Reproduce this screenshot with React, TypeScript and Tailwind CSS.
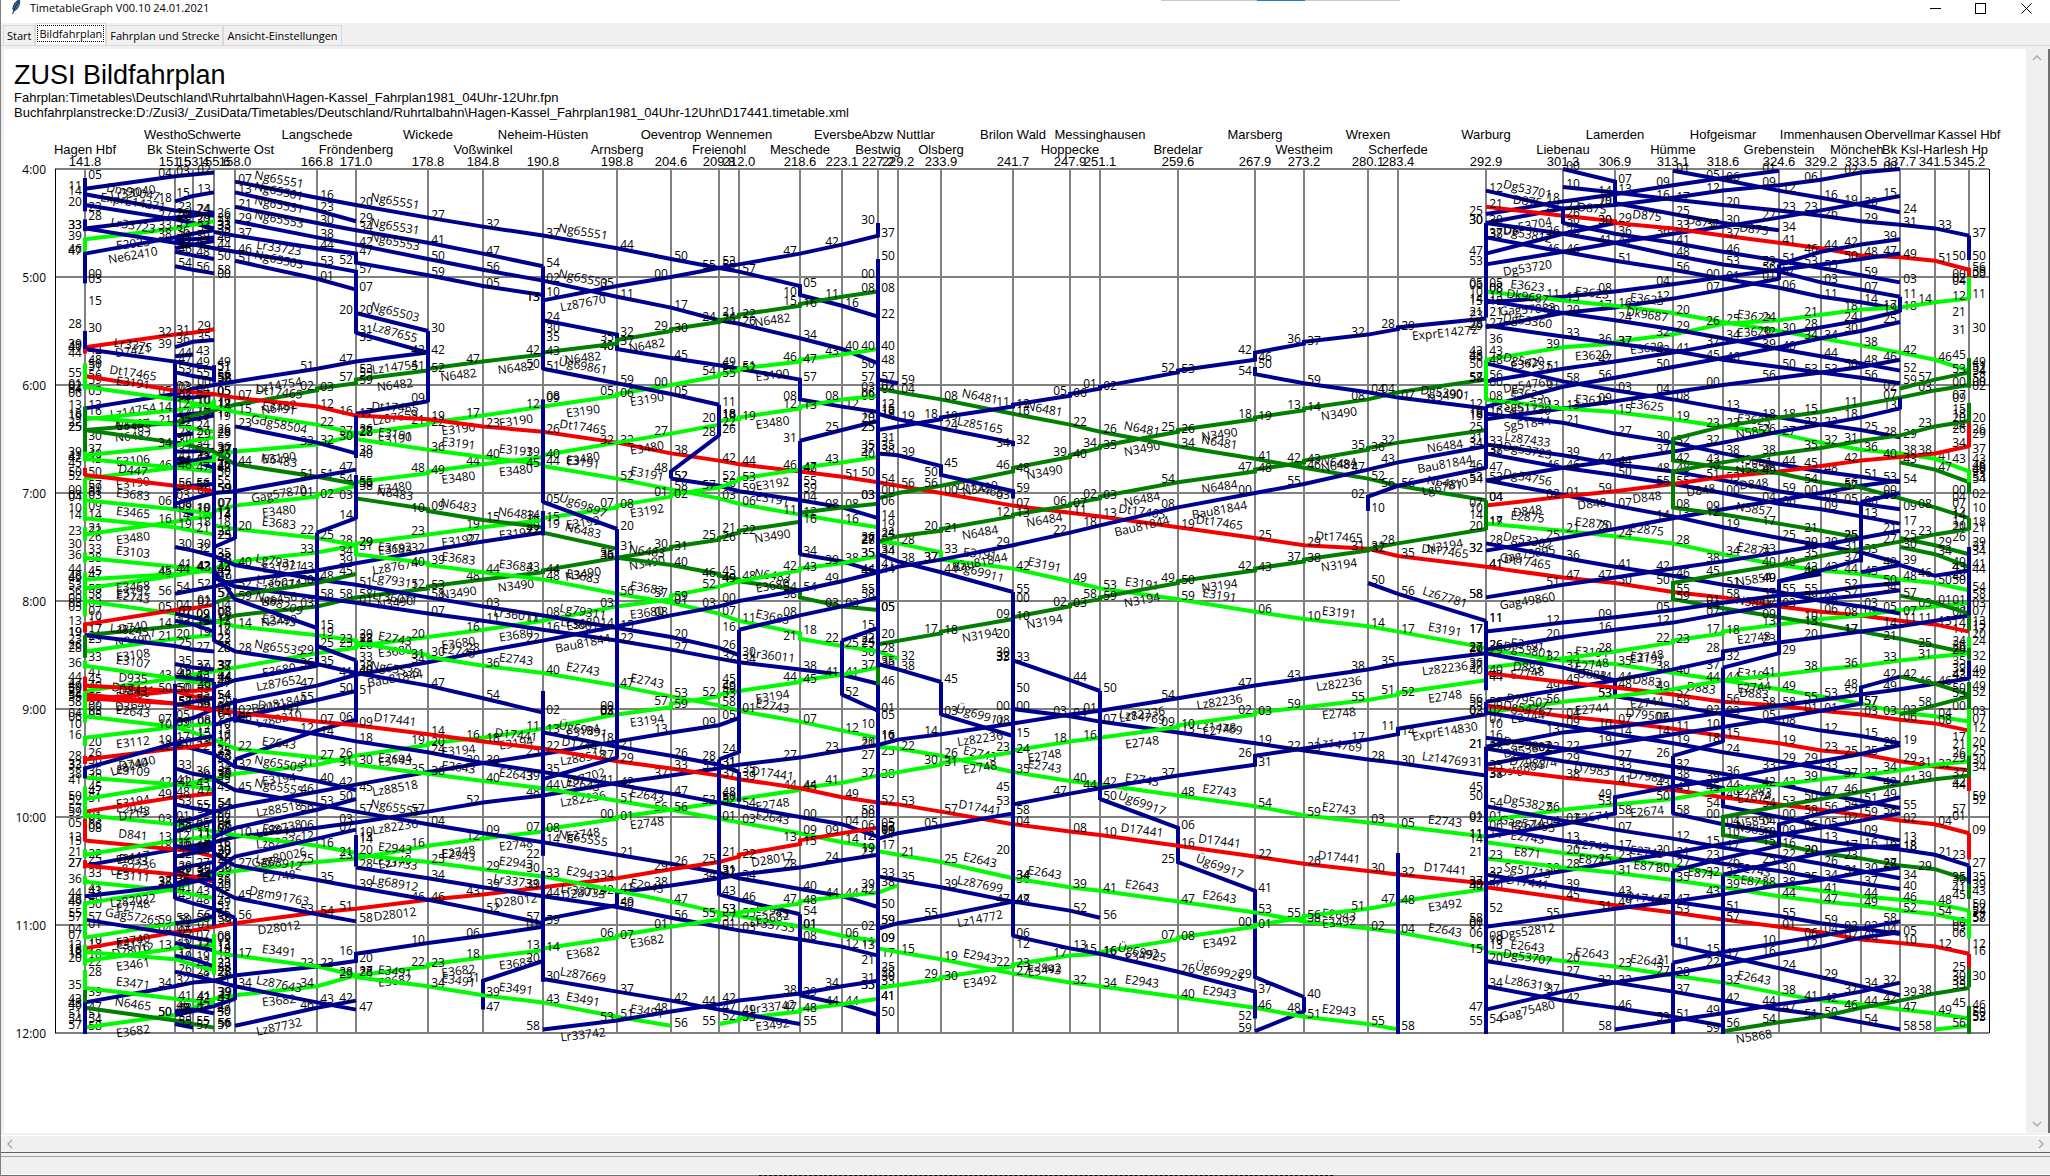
import React from "react";

type Kind = "b" | "g" | "d" | "r";

const COLORS: Record<Kind, string> = {
  b: "#000090",
  g: "#00fa00",
  d: "#007f00",
  r: "#f40000",
};

/* name, km, x on the sheet, optional fixed start for a cut-off name */
const STATIONS: [string, string, number, number?][] = [
  ["Hagen Hbf", "141.8", 85],
  ["Westho", "151.5", 175, 144],
  ["Bk Stein", "153.4", 193, 147],
  ["Schwerte", "155.6", 214],
  ["Schwerte Ost", "158.0", 235],
  ["Langschede", "166.8", 317],
  ["Fröndenberg", "171.0", 356],
  ["Wickede", "178.8", 428],
  ["Voßwinkel", "184.8", 483],
  ["Neheim-Hüsten", "190.8", 543],
  ["Arnsberg", "198.8", 617],
  ["Oeventrop", "204.6", 671],
  ["Freienohl", "209.8", 719],
  ["Wennemen", "212.0", 739],
  ["Meschede", "218.6", 800],
  ["Eversbe", "223.1", 842, 814],
  ["Bestwig", "227.2", 878],
  ["Abzw Nuttlar", "229.2", 898],
  ["Olsberg", "233.9", 941],
  ["Brilon Wald", "241.7", 1013],
  ["Hoppecke", "247.9", 1070],
  ["Messinghausen", "251.1", 1100],
  ["Bredelar", "259.6", 1178],
  ["Marsberg", "267.9", 1255],
  ["Westheim", "273.2", 1304],
  ["Wrexen", "280.1", 1368],
  ["Scherfede", "283.4", 1398],
  ["Warburg", "292.9", 1486],
  ["Liebenau", "301.3", 1563],
  ["Lamerden", "306.9", 1615],
  ["Hümme", "313.1", 1673],
  ["Hofgeismar", "318.6", 1723],
  ["Grebenstein", "324.6", 1779],
  ["Immenhausen", "329.2", 1821],
  ["Möncheh", "333.5", 1861, 1830],
  ["Obervellmar", "337.7", 1900],
  ["Bk Ksl-Harlesh Hp", "341.5", 1935],
  ["Kassel Hbf", "345.2", 1969],
];

/* kind, train number, stops as "station:arrival-departure" */
const TRAINS: [Kind, string, string][] = [
  ["b", "Lr33040", "3:402 2:403 1:404 0:411"],
  ["b", "Dm90047", "0:414 1:423 2:424 3:426"],
  ["b", "", "3:424 2:426 1:427 0:433"],
  ["b", "ExprE14271", "0:420 1:428 2:430 3:433"],
  ["g", "E2023", "3:429 2:431 1:433 0:439"],
  ["b", "Lr33723", "0:433 1:441 2:442 3:444 4:446 5:453 6:457-520"],
  ["b", "Ne62410", "3:434 2:436 1:438 0:447"],
  ["b", "", "3:413 2:415 1:418"],
  ["b", "", "1:439 2:439 3:438"],
  ["b", "", "1:444 2:442 3:440"],
  ["b", "", "1:446 2:448 3:450"],
  ["b", "", "1:454 2:456 3:458"],
  ["r", "D7421", "3:529 2:531 1:532 0:539"],
  ["b", "", "3:535 2:536 1:539"],
  ["b", "Lr3375", "0:540 1:547 2:549 3:551"],
  ["b", "", "1:544 2:543"],
  ["b", "", "1:553 2:555 3:557"],
  ["b", "", "1:607 2:607 3:605"],
  ["b", "", "1:617 2:616 3:615"],
  ["b", "", "1:621 2:619 3:617"],
  ["b", "", "1:628 2:627"],
  ["b", "", "1:637 2:637 3:636"],
  ["b", "", "1:644 2:642 3:640"],
  ["b", "", "1:641 2:642 3:646"],
  ["b", "", "1:658 2:656 3:655"],
  ["b", "", "1:708 2:712"],
  ["b", "Ng65551", "4:407 5:416 6:420 7:427 8:432 9:437 10:444 11:450 12:455 13:457 14:505-510 15:516 16:522"],
  ["b", "Ng65501", "4:413 5:423 6:429"],
  ["b", "Ng65531", "4:421 5:430 6:434 7:441 8:447 9:454"],
  ["b", "Ng65553", "4:429 5:438 6:442 7:450 8:456 9:502 10:511 11:517 12:524 13:526 14:534 15:540 16:548"],
  ["b", "", "3:435 4:437 5:444 6:447-452 7:459 8:505 9:510-513"],
  ["b", "Ng65503", "4:451 5:501 6:507"],
  ["b", "Ng65503", "6:520 7:530"],
  ["b", "Lz87655", "6:531 7:542"],
  ["b", "Lz14754", "7:542 6:547 5:551 4:558 3:600 2:602 1:605 0:613"],
  ["b", "Lz87659", "7:609 6:616"],
  ["b", "Lz87670", "16:430-437 15:442 14:447 13:453 12:455 11:500 10:505 9:513"],
  ["b", "", "9:524 10:532-540 11:545 12:549 13:551 14:557-608 15:612 16:615"],
  ["b", "Lz85165", "16:616 17:619 18:624 19:632-634"],
  ["d", "N6482", "16:508 15:511 14:515-516 13:521-522 12:524-525 11:529-530 10:535-537 9:542-543 8:547 7:551-552 6:557-559 5:602-603 4:611 3:614 2:617 1:621 0:625"],
  ["g", "E3190", "16:540 15:543 14:546-547 13:551-552 12:554-555 11:600 10:605-606 9:612 8:617 7:621-622 6:627-628 5:633 4:637 3:639-642 2:644 1:646 0:652"],
  ["r", "Dt17465", "0:555 1:603 2:604 3:605 4:607 5:612 6:617 7:619 8:623 9:626 10:632 11:638 12:642 13:644 14:648 15:651 16:654 17:656 18:700 19:707 20:711 21:713 22:719 23:725 24:729 25:731 26:735 27:741 28:747 29:750 30:755 31:758 32:803 33:806 34:808 35:811 36:813 37:817"],
  ["g", "E3480", "16:606 15:608 14:612-613 13:618-619 12:620-622 11:627 10:632 9:639-640 8:644 7:648-649 6:654-656 5:701-702 4:707 3:710-713 2:714 1:716 0:723"],
  ["g", "E3191", "0:601 1:608 2:610 3:612 4:615 5:622 6:627-630 7:636 8:640 9:644-645 10:652 11:658 12:703 13:706 14:712 15:716 16:719-727 17:728 18:733-737 19:742 20:749 21:753 22:759 23:806 24:810 25:814 26:817 27:826-827 28:833 29:835 30:840 31:844 32:849 33:853 34:857 35:902 36:904 37:907"],
  ["b", "Üg69861", "9:551 10:559 11:605 12:611"],
  ["b", "", "12:628 11:648-652"],
  ["b", "", "11:652 12:656 13:659 14:704 15:708 16:714"],
  ["b", "", "16:620 15:625 14:631"],
  ["g", "E3192", "16:640 15:643 14:646-647 13:652-653 12:657 11:701-702 10:707-708 9:714-715 8:719 7:723 6:728-729 5:733 4:738 3:742 2:744 1:746 0:753"],
  ["d", "N3490", "27:557 26:604 25:608 24:613-614 23:618-619 22:625-626 21:634-635 20:639-640 19:646-648 18:656 17:700 16:703-706 15:708 14:711-716 13:721-722 12:725-726 11:730-731 10:736 9:743-744 8:748 7:752-753 6:758 5:803 4:808 3:812 2:813 1:814 0:819"],
  ["d", "N6483", "0:625 1:632 2:634 3:637 4:644 5:651 6:655-703 7:709-710 8:715 9:719-722 10:731-736 11:740 12:745-746 13:748-749 14:754-758 15:803 16:805"],
  ["d", "N6481", "16:602 17:604 18:608 19:616 20:622 21:626 22:634 23:641 24:646 25:652 26:656 27:704"],
  ["d", "N6484", "27:625 26:632 25:635-636 24:642-643 23:647-648 22:654 21:702-703 20:706-707 19:712-713 18:720-721 17:724 16:727"],
  ["d", "N3194", "27:720 26:728 25:731-732 24:737-738 23:742-743 22:749-750 21:758-759 20:802-803 19:809-810 18:817-818 16:824"],
  ["b", "Üg69897", "9:705 10:720"],
  ["b", "Lz87674", "9:722 8:727 7:732 6:739 5:743 4:749 3:752 2:754 1:756"],
  ["b", "", "14:734 15:738 16:744"],
  ["g", "E3683", "0:704 1:709 2:710 3:712-718 4:720 5:725 6:729-734 7:739-740 8:744 9:748 10:756 11:801 12:807 13:811 14:818-821 15:825 16:828 17:832"],
  ["g", "E3680", "16:735 15:739 14:742-743 13:749 12:752 11:757-759 10:803 9:811 8:816 7:820 6:825-826 5:829 4:837 3:839 2:841 1:843 0:850"],
  ["b", "Lg79311", "1:730 2:732 3:735 4:740 5:748 6:751 7:758 8:803 9:808 10:815 11:820 12:826 13:830"],
  ["b", "Lr36011", "3:747 4:752 5:758 6:801 7:807 8:811 9:816 10:822 11:827 12:832 13:834 14:838 15:841 16:846"],
  ["b", "Bau81844", "27:634 26:643 25:647 24:655 23:700 22:708 21:718 20:722 19:729 18:737 17:741 16:744 15:749 14:754 13:800 12:803 11:808 10:814 9:822 8:828 7:834 6:841 5:847 4:856 3:900 2:905 1:907"],
  ["b", "ExprE14272", "27:523 26:528-529 25:532 24:536-537 23:542-546 22:552-553 21:601-602 20:605-606 19:611-612 18:618-619 16:625"],
  ["b", "Dg53901", "23:550-554 24:559 25:604 26:607 27:613"],
  ["b", "", "16:557 17:559"],
  ["b", "", "16:638 17:639 18:645-650 19:659-703"],
  ["b", "Üg69911", "16:734 17:738 18:744 19:755"],
  ["b", "", "19:833 20:844 21:850"],
  ["b", "Üg69917", "21:950 22:1006-1025 23:1041-1129 24:1140"],
  ["b", "", "24:1148 23:1159"],
  ["b", "Lz67781", "25:750 26:756 27:811"],
  ["b", "Lg67810", "27:646 26:656 25:702-710"],
  ["b", "", "16:835 17:838 18:845"],
  ["b", "Üg69911", "18:903 19:915"],
  ["b", "Lz14769", "19:900 20:904 21:907 22:913 23:919 24:923 25:928 26:930 27:937"],
  ["b", "", "16:758 15:803 14:808 13:816"],
  ["b", "", "16:815 15:822"],
  ["b", "", "15:852 16:901"],
  ["d", "N6456", "6:745 5:750 4:757 3:801"],
  ["g", "E2743", "0:800 1:807 2:809 3:811 4:814 5:819 6:822-823 7:830-831 8:836 9:840 10:847 11:853 12:858 13:901 14:907 15:912 16:916-921 17:922 18:926 19:935 20:940 21:942 22:948 23:954 24:959 25:1003 26:1005 27:1011-1014 28:1020 29:1023 30:1027 31:1032 32:1038 33:1041 34:1044 35:1046 36:1048 37:1052"],
  ["g", "E3194", "16:837 15:841 14:844-845 13:850 12:852-853 11:857-859 10:903 9:911 8:916 7:919-920 6:926 5:931 4:936 3:939 2:941 1:942 0:950"],
  ["b", "Lz82236", "27:829 26:835 25:838 24:843 23:847 22:854 21:901 20:903 19:908 18:914 17:917 16:920 15:923 14:927 13:931 12:933 11:937 10:941 9:948 8:952 7:957 6:1003 5:1006 4:1011 3:1014 2:1016 1:1018 0:1027"],
  ["g", "E2748", "37:801 36:803 35:805 34:808 33:810 32:813 31:817-818 30:822-823 29:828 28:832 27:837-844 26:851-852 25:855 24:859 23:902-903 22:909-910 21:916 20:918 19:923-924 18:930-931 16:937 15:941 14:944-945 13:950 12:952 11:956 10:1000-1001 9:1007-1008 8:1012 7:1016 6:1023 5:1025 4:1030 3:1032 2:1036 1:1040 0:1048"],
  ["b", "Ng65535", "3:822 4:828 5:835 6:840 7:847 8:854 9:902"],
  ["b", "Lz87652", "5:836 4:844 3:848"],
  ["b", "", "5:825 6:833"],
  ["b", "", "6:906 5:912 4:928"],
  ["b", "Lz88210", "6:850 5:855 4:905 3:909"],
  ["b", "Ng88209", "3:743 4:759 5:815"],
  ["b", "Lz88518", "13:905 12:909 11:913 10:918 9:925 8:930 7:935 6:942 5:946 4:954 3:957 2:1001 1:1003"],
  ["b", "Üg69891", "9:913 10:921 11:926 12:931 13:935"],
  ["r", "D17441", "0:852 1:857 2:859 3:900 4:902 5:907 6:909 7:914 8:918 9:922 10:929 11:933 12:937 13:939 14:944 15:949 16:952 17:953 18:957 19:1004 20:1008 21:1010 22:1016 23:1022 24:1026 25:1030 26:1032 27:1037-1039 28:1045 29:1049 30:1053 31:1057 32:1101 33:1104 34:1108 35:1110 36:1112 37:1116"],
  ["b", "ExprE14830", "27:903 26:911-914 25:917 24:922 23:926-931 22:937 21:944 20:947 19:953-958 18:1005 17:1009 16:1012"],
  ["g", "E2643", "0:904 1:910 2:913 3:917 4:922 5:927 6:930-931 7:936 8:940 9:944 10:951 11:956 12:1001 13:1003 14:1009 15:1014 16:1017-1019 17:1021 18:1025 19:1034 20:1039 21:1041 22:1047 23:1053 24:1058 25:1102 26:1104 27:1113-1115 28:1120 29:1123 30:1128 31:1132 32:1138 33:1142 34:1144 35:1147 36:1149 37:1152"],
  ["b", "Ng65505", "1:920 2:922 3:925 4:932 5:940 6:945"],
  ["b", "", "4:906 5:914 6:918 7:924 8:930 9:935 10:942 11:947 12:952 13:954 14:1000 15:1004 16:1011"],
  ["b", "Lz87702", "10:927 9:939"],
  ["b", "Ng65555", "3:939 4:945 5:953 6:957 7:1004 8:1009 9:1014 10:1021 11:1026 12:1031 13:1034 14:1040 15:1044 16:1050"],
  ["r", "D28012", "16:1006 15:1009 14:1013-1015 13:1021-1022 12:1025 11:1029 10:1034 9:1039 8:1043 7:1046 6:1051 5:1053 4:1059 3:1101 2:1103 1:1104 0:1113"],
  ["b", "", "16:1021 15:1024 14:1028 13:1032 12:1034 11:1038 10:1042-1049 9:1057"],
  ["b", "Lz87699", "16:1033 17:1035 18:1039 19:1047 20:1052 21:1056"],
  ["b", "Lz14772", "19:1047 18:1055 17:1059 16:1102"],
  ["b", "", "13:924 12:928"],
  ["b", "", "12:1043 13:1046 14:1054"],
  ["b", "", "14:1139 15:1144 16:1150"],
  ["b", "Lr33733", "6:1028 7:1034 8:1039 9:1044 10:1050 11:1056 12:1101 13:1103 14:1108 15:1112 16:1117"],
  ["g", "E2943", "0:959 1:1004 2:1006 3:1008 4:1010 5:1016 6:1020-1021 7:1025 8:1029 9:1033 10:1041 11:1047 12:1053 13:1055 14:1101 15:1106 16:1109-1113 17:1115 18:1119 19:1127 20:1132 21:1134 22:1140 23:1146 24:1151 25:1155 26:1158"],
  ["g", "E3682", "17:1038 16:1042 15:1044 14:1047-1048 13:1053 12:1055-1057 11:1101 10:1106-1107 9:1113-1114 8:1118 7:1122-1123 6:1128 5:1134 4:1139 3:1141 2:1146 1:1150 0:1157"],
  ["g", "E3492", "27:1040 26:1047-1048 25:1051 24:1055-1056 23:1100-1101 22:1107-1108 21:1115-1116 20:1117 19:1122-1123 18:1129-1130 16:1135-1141 15:1144 14:1147-1148 13:1152-1153 12:1155"],
  ["b", "Üg69925", "19:1106 20:1113 21:1116 22:1126 23:1137-1152"],
  ["b", "Dgm91763", "1:1030 2:1034 3:1039 4:1045 5:1054 6:1058"],
  ["b", "Lg68912", "3:1020 4:1027 5:1035 6:1039 7:1046 8:1052 9:1059"],
  ["b", "Lz88738", "6:950 5:956 4:1006 3:1011"],
  ["b", "Gag80026", "6:1007 5:1012 4:1022 3:1030 2:1034 1:1037"],
  ["b", "", "9:1101 8:1106 7:1110 6:1116-1120 5:1123 4:1128 3:1131 2:1132 1:1134 0:1143"],
  ["b", "", "9:1120 8:1131-1147"],
  ["g", "E3491", "3:1115 4:1117 5:1123 6:1128-1129 7:1134 8:1139 9:1143 10:1151 11:1156"],
  ["b", "Lz87669", "9:1130 10:1137 11:1142 12:1147 13:1149 14:1155"],
  ["b", "Lr33742", "16:1131 15:1134 14:1138 13:1142 12:1144 11:1148 10:1153 9:1158"],
  ["b", "Lz87643", "1:1126 2:1128 3:1131 4:1134 5:1143 6:1147"],
  ["b", "Lz87732", "6:1142 5:1146 4:1156"],
  ["b", "", "4:1141 3:1145 2:1148 1:1150"],
  ["b", "", "1:1045 2:1048 3:1051 4:1056"],
  ["b", "Gdg58504", "4:623 5:632 6:638"],
  ["b", "Gag57870", "6:647 5:651 4:659 3:700 2:703 1:706"],
  ["b", "", "6:714 5:722"],
  ["b", "", "4:725 3:730"],

  ["g", "E3187", "3:610 2:612 1:614 0:619"],
  ["g", "", "0:618 1:622 2:624 3:626"],
  ["g", "E3106", "3:629 2:631 1:634 0:639"],
  ["g", "", "0:641 1:646 2:647 3:648"],
  ["r", "D447", "0:650 1:656 2:657 3:659"],
  ["g", "E3465", "0:714 1:719 2:721 3:723"],
  ["g", "E3103", "0:736 1:741 2:742 3:744"],
  ["g", "E3468", "3:743 2:744 1:745 0:748"],
  ["r", "D740", "3:802 2:804 1:805 0:813"],
  ["g", "E3108", "3:819 2:820 1:821 0:828"],
  ["b", "Lz82451", "0:819 1:825 2:827 3:828"],
  ["g", "E3107", "0:836 1:843 2:845 3:846"],
  ["r", "D935", "0:847 1:850 2:853 3:854"],
  ["r", "D2640", "3:849 2:850 1:850 0:855"],
  ["r", "D843", "0:854 1:857 2:859 3:901"],
  ["g", "E3112", "3:908 2:909 1:910 0:916"],
  ["r", "D740", "3:919 2:921 1:922 0:928"],
  ["b", "Lz82440", "3:915 2:917 1:919 0:933"],
  ["g", "E3109", "0:938 1:942 2:943 3:945"],
  ["r", "D713", "3:947 2:948 1:949 0:957"],
  ["r", "D841", "0:1013 1:1018 2:1019 3:1022"],
  ["g", "E3117", "3:1011 2:1012 1:1013 0:1021"],
  ["r", "D833", "0:1027 1:1032 2:1033 3:1036"],
  ["g", "E3111", "0:1036 1:1041 2:1043 3:1045"],
  ["b", "Lz82022", "3:1034 2:1036 1:1038 0:1044"],
  ["g", "E2740", "3:1056 2:1058 1:1059 0:1107"],
  ["b", "Gag57265", "0:1057 1:1105 2:1107 3:1109"],
  ["g", "E3116", "0:1115 1:1119 2:1122 3:1125"],
  ["g", "E3461", "3:1111 2:1112 1:1113 0:1120"],
  ["g", "E3471", "0:1135 1:1141 2:1142 3:1143"],
  ["d", "N6465", "0:1146 1:1153 2:1155 3:1157"],
  ["b", "", "1:807 2:809 3:812"],
  ["b", "", "1:811 2:813 3:817"],
  ["b", "", "1:835 2:837 3:838"],
  ["b", "", "1:842 2:843 3:844"],
  ["b", "", "1:858 2:856 3:854"],
  ["b", "", "1:933 2:936 3:938"],
  ["b", "", "1:953 2:955 3:957"],
  ["b", "", "1:1008 2:1005 3:1002"],
  ["b", "", "1:1016 2:1018 3:1016"],
  ["b", "", "1:1022 2:1020 3:1018"],
  ["b", "", "1:1029 2:1027 3:1025"],
  ["b", "", "1:1059 2:1058 3:1055"],
  ["b", "", "1:1110 2:1112 3:1114"],
  ["b", "", "1:1117 2:1119 3:1123"],
  ["b", "", "1:1148 2:1147 3:1149"],
  ["b", "", "1:1155 2:1157"],

  ["b", "", "28:400 29:407-419 30:425 31:430 32:434"],
  ["b", "", "28:410 29:413 30:417 31:420 32:423 33:426 34:429 35:431 36:433 37:437"],
  ["b", "", "32:401 31:405 30:409 29:414 28:418 27:425"],
  ["b", "Dg53704", "35:400 34:402 33:406 32:409 31:412 30:416 29:420 28:422 27:430"],
  ["b", "Dg53701", "27:412 28:422"],
  ["b", "", "30:401 31:406 32:412 33:416 34:420 35:424"],
  ["b", "", "27:430 28:436 29:441 30:448 31:453 32:457 33:503 34:507 35:511"],
  ["b", "", "28:430 29:436 30:441 31:446 32:451 33:455 34:459 35:503"],
  ["b", "", "29:430 28:436 27:447"],
  ["b", "Dg53720", "35:415 34:419 33:423 32:427 31:432 30:436 29:441 28:446 27:453"],
  ["r", "D875", "27:421 28:426 29:429-430 30:433 31:437 32:441 33:444 34:448 35:449 36:451 37:456"],
  ["b", "Dg53812", "27:438 28:446 29:451 30:456 31:501 32:506 33:511 34:514 35:518"],
  ["b", "Gag57883", "35:447 34:450 33:453 32:456 31:500 30:504 29:508 28:511 27:514"],
  ["b", "", "32:501 31:507 30:512 29:517 28:520 27:528"],
  ["b", "", "35:439 34:442 33:446 32:453"],
  ["g", "E3623", "27:508 28:513 29:516 30:520 31:525 32:530 33:534 34:538 35:542 36:546 37:552"],
  ["g", "E3620", "37:512 36:514 35:517 34:518 33:521 32:524 31:526 30:532 29:536-537 28:539 27:546"],
  ["b", "Dk9687", "27:513 28:520 29:524 30:529 31:534 32:540 33:544 34:548 35:552"],
  ["b", "Dg53360", "27:527 28:533 29:537 30:541 31:546 32:550 33:553 34:556 35:559"],
  ["b", "Dg54765", "35:519 34:524 33:528 32:532 31:537 30:542 29:547 28:551 27:558"],
  ["b", "Sg51730", "35:525 34:530 33:534 32:539 31:545 30:550 29:556 28:601 27:612"],
  ["b", "Dg54751", "27:548 28:558 29:603 30:608 31:613 32:618 33:622 34:625 35:629"],
  ["b", "Sg51844", "35:546 34:550 33:553 32:556 31:600 30:604 29:609 28:613 27:619"],
  ["g", "E3625", "27:608 28:613 29:615 30:619 31:623 32:627 33:632 34:636 35:638 36:641 37:648"],
  ["b", "Sg51730", "27:616 28:621 29:627 30:632 31:638 32:644 33:648 34:651 35:654"],
  ["b", "", "35:613 34:618 33:622 32:626 31:632 30:637 29:642 28:646 27:653"],
  ["b", "Lz87433", "27:633 28:639 29:644 30:648 31:653 32:659 33:703 34:706 35:709"],
  ["b", "Dg53723", "27:638 28:646 29:650 30:655 31:700 32:706 33:709 34:713 35:717"],
  ["b", "Dg54756", "27:653 28:701 29:707 30:713 31:719 32:725 33:729 34:733 35:739"],
  ["r", "D848", "37:634 36:638 35:640 34:642 33:645 32:648 31:651 30:655 29:659 28:702 27:707"],
  ["g", "E2875", "27:717 28:721 29:724 30:728 31:734 32:740 33:743 34:745 35:748 36:750 37:754"],
  ["b", "Gag75895", "35:653 34:656 33:700 32:704 31:709 30:714 29:720 28:725 27:732"],
  ["b", "Dg53302", "27:728 28:736 29:741 30:746 31:751 32:755 33:800 34:803 35:807"],
  ["d", "N5851", "37:600 36:603 35:607 34:611 33:615 32:618 31:623 30:630-642 31:646 32:649 33:654 34:657 35:703 36:708 37:714"],
  ["d", "", "37:553 36:557 35:602"],
  ["d", "N5857", "37:620 36:623 35:628 34:631 33:635 32:638 31:643 30:648-708 31:712 32:717 33:721 34:725"],
  ["d", "", "35:643 36:647 37:654"],
  ["d", "N5854", "37:720 36:723 35:727 34:731 33:735 32:740 31:745 30:750-759 31:804 32:809 33:813 34:817 35:821 36:825 37:829"],
  ["d", "", "35:725 36:729 37:734"],
  ["d", "", "35:730 36:734 37:741"],
  ["b", "Gag49860", "35:721 34:725 33:729 32:733 31:738 30:742 29:747 28:751 27:758"],
  ["b", "", "35:700 34:705"],
  ["b", "", "34:737 33:743 32:749"],
  ["b", "", "35:750 34:752 33:755 32:757 31:801 30:805 29:809 28:812 27:817"],
  ["b", "", "35:754 34:757 33:759 32:802 31:807 30:812 29:816 28:820 27:827"],
  ["b", "", "37:743 36:746 35:740 34:744"],
  ["b", "", "33:745 32:749-829 31:837"],
  ["b", "", "37:808 36:811 35:814 34:817 33:820 32:823 31:828-832 30:838 29:844 28:849 27:856"],
  ["b", "Dg53801", "27:829 28:837 29:844-853 30:858 31:903 32:908 33:912 34:915 35:919"],
  ["r", "D883", "27:840 28:845 29:848 30:852 31:856 32:858 33:901 34:903 35:906 36:908 37:912"],
  ["g", "E2744", "37:829 36:831 35:833 34:836 33:838 32:841 31:844 30:849 29:853 28:856 27:902"],
  ["r", "D79507", "27:858 28:904 29:907 30:911 31:915 32:919 33:923 34:925 35:929 36:932 37:934"],
  ["b", "Dg54767", "27:902 28:909 29:914 30:919 31:924 32:929 33:933 34:937 35:941"],
  ["b", "Dg53807", "37:843 36:846 35:849 34:852 33:855 32:858 31:902 30:906 29:910 28:913 27:921"],
  ["b", "Dstg80474", "35:842 34:848-857 33:901 32:905 31:910 30:914 29:919 28:923 27:931"],
  ["b", "", "27:916 28:922 29:927 30:932 31:936 32:942 33:947 34:951 35:955"],
  ["b", "Dg53802", "27:922 28:929 29:933 30:938 31:944-954 32:1000 33:1005 34:1009 35:1013"],
  ["r", "D7983", "27:933 28:938 29:941 30:945 31:949 32:953 33:956 34:959 35:1002 36:1004 37:1009"],
  ["g", "E2674", "37:929 36:931 35:934 34:937 33:939 32:942 31:945 30:950 29:953 28:956 27:1002"],
  ["b", "", "35:920 34:925 33:929 32:933 31:939 30:943 29:949-958 28:1004 27:1011"],
  ["b", "", "31:918 30:926"],
  ["b", "", "30:958 31:1004 32:1009 33:1013 34:1016 35:1018"],
  ["d", "N5859", "37:937 36:939 35:942 34:946 33:950 32:954 31:1000-1010 32:1015 33:1020 34:1023 35:1027 36:1029 37:1035"],
  ["d", "", "35:757 36:801 37:807"],
  ["d", "", "35:842 36:846 37:852"],
  ["d", "", "37:853 36:858 35:903"],
  ["b", "Dg53827", "27:954 28:1002 29:1007 30:1012 31:1017 32:1022 33:1026 34:1030 35:1034"],
  ["b", "Gag57455", "27:1006 28:1013 29:1017 30:1021 31:1026 32:1030 33:1034 34:1037 35:1040"],
  ["b", "", "35:949 34:954 33:958 32:1004-1016 31:1023 30:1030"],
  ["b", "", "35:958 34:1002 33:1006 32:1010 31:1015 30:1020 29:1025 28:1030 27:1037"],
  ["b", "", "35:1016 34:1017 33:1020 32:1025 31:1032"],
  ["g", "E871", "27:1023 28:1028 29:1031 30:1035 31:1039 32:1044 33:1047 34:1049 35:1052 36:1054 37:1058"],
  ["b", "Sg51713", "27:1032 28:1039 29:1043 30:1047 31:1051 32:1055 33:1059 34:1102 35:1105"],
  ["b", "Dgs52812", "35:1028 34:1031 33:1035 32:1038 31:1043 30:1047 29:1051 28:1055 27:1101"],
  ["b", "", "35:1018 36:1021 37:1027"],
  ["b", "", "30:1111 31:1117 32:1124 33:1129 34:1134 35:1139"],
  ["b", "Dg53707", "27:1120 28:1127 29:1132 30:1137 31:1142 32:1147 33:1150 34:1154 35:1158"],
  ["b", "Lz86319", "27:1134 28:1142 29:1146 30:1151 31:1156"],
  ["b", "Gag75480", "35:1104 34:1107 33:1112 32:1116 31:1122 30:1127 29:1132 28:1137 27:1147"],
  ["b", "", "35:1058 34:1102 33:1106 32:1110 31:1115 30:1121"],
  ["b", "", "35:1132 34:1137 33:1141 32:1144 31:1149 30:1153 29:1158"],
  ["d", "N5868", "37:1135 36:1138 35:1142 34:1146 33:1151 32:1154 31:1159"],
  ["g", "", "37:1156 36:1158"],
];

/* standing times: kind, station, from, to */
const STAYS: [Kind, number, number, number][] = [
  ["b", 0, 405, 423], ["b", 0, 428, 434], ["g", 0, 438, 446], ["b", 0, 446, 503],
  ["b", 0, 530, 540], ["r", 0, 540, 542], ["g", 0, 548, 602], ["d", 0, 612, 637],
  ["g", 0, 637, 642], ["r", 0, 646, 650], ["g", 0, 652, 715], ["g", 0, 719, 726],
  ["g", 0, 733, 738], ["g", 0, 744, 808], ["r", 0, 812, 817], ["d", 0, 819, 831],
  ["g", 0, 833, 837], ["r", 0, 842, 856], ["g", 0, 850, 907], ["g", 0, 915, 920],
  ["r", 0, 926, 930], ["b", 0, 932, 938], ["g", 0, 943, 1001], ["r", 0, 1001, 1013],
  ["g", 0, 1018, 1022], ["r", 0, 1024, 1028], ["g", 0, 1033, 1037], ["g", 0, 1047, 1107],
  ["g", 0, 1111, 1122], ["g", 0, 1125, 1135], ["d", 0, 1136, 1143], ["b", 0, 1143, 1200],
  ["b", 1, 546, 708], ["b", 1, 846, 1045],
  ["b", 3, 549, 558], ["g", 3, 608, 613], ["b", 3, 643, 822], ["b", 3, 845, 1100], ["g", 3, 1105, 1127],
  ["b", 4, 635, 725], ["b", 4, 854, 907], ["b", 4, 928, 932], ["b", 4, 1056, 1141],
  ["b", 5, 722, 836], ["b", 6, 447, 452], ["b", 6, 457, 531], ["b", 6, 617, 640],
  ["b", 6, 650, 714], ["b", 6, 833, 907], ["b", 6, 1010, 1027], ["g", 6, 728, 734],
  ["b", 7, 530, 609], ["b", 9, 454, 551], ["b", 9, 608, 705], ["b", 9, 710, 723],
  ["b", 9, 850, 1021], ["b", 9, 1030, 1131], ["b", 10, 720, 927],
  ["b", 12, 611, 628], ["b", 13, 816, 924], ["b", 12, 928, 1043], ["b", 13, 935, 951],
  ["b", 14, 631, 734], ["b", 14, 1054, 1139], ["b", 15, 822, 852],
  ["b", 16, 450, 1200], ["d", 16, 837, 846], ["b", 18, 845, 903], ["b", 19, 755, 1106],
  ["b", 21, 850, 950], ["b", 24, 1140, 1148], ["b", 26, 1020, 1200],
  ["b", 27, 430, 522], ["g", 27, 546, 608], ["b", 27, 612, 646], ["d", 27, 704, 720],
  ["b", 27, 811, 849], ["b", 27, 856, 903], ["b", 27, 921, 1200],
  ["b", 28, 422, 430], ["b", 30, 926, 958], ["b", 30, 1030, 1111], ["b", 30, 1121, 1200],
  ["b", 31, 837, 918], ["b", 31, 1032, 1200], ["b", 32, 453, 501],
  ["b", 34, 706, 738], ["b", 35, 511, 519], ["b", 35, 607, 613],
  ["b", 37, 437, 450], ["r", 37, 455, 500], ["g", 37, 500, 512], ["d", 37, 545, 601],
  ["d", 37, 610, 621], ["r", 37, 621, 634], ["g", 37, 647, 654], ["d", 37, 654, 700],
  ["d", 37, 714, 720], ["b", 37, 730, 808], ["d", 37, 808, 816], ["g", 37, 820, 826],
  ["d", 37, 826, 832], ["b", 37, 833, 843], ["d", 37, 845, 900], ["g", 37, 900, 926],
  ["d", 37, 926, 938], ["r", 37, 938, 945], ["r", 37, 1009, 1023], ["b", 37, 1027, 1037],
  ["d", 37, 1037, 1045], ["g", 37, 1052, 1107], ["r", 37, 1116, 1124], ["d", 37, 1124, 1134],
  ["d", 37, 1145, 1200],
];

/* further minutes noted beside a station: station, side, times */
const NOTES: [number, -1 | 1, string][] = [
  [0, -1, "446 528 541 544 602 604 606 622 642 645 700 703 710 730 744 749 756 803 805 823 826 844 849 858 906 910 932 941 952 1005 1015 1049 1055 1104 1116 1118 1145 1151 1154"],
  [0, 1, "405 423 428 500 503 515 530 542 548 550 551 556 559 605 613 616 630 637 640 643 650 657 659 701 703 709 714 721 723 726 733 738 745 747 755 758 803 807 810 814 817 821 823 833 841 845 849 855 857 900 903 905 920 926 930 936 940 945 947 951 1001 1003 1006 1008 1022 1025 1033 1041 1043 1046 1050 1057 1101 1110 1112 1118 1122 1128 1139 1147 1151 1154 1158"],
  [3, 1, "429 431 433 500 549 551 556 558 605 610 612 617 619 628 629 637 640 643 647 650 659 707 711 714 718 725 738 742 745 753 757 804 808 813 818 823 828 837 842 847 902 904 910 913 916 920 924 929 934 942 954 1000 1004 1008 1010 1020 1022 1028 1033 1040 1049 1058 1108 1113 1118 1123 1128 1139 1147 1150 1156"],
  [6, 1, "535 553 555 626 628 640 656 658 731 758 820 823 825 838 840 851 1010 1013 1014 1127 1129"],
  [9, -1, "550 716 720 1022 1030"],
  [9, 1, "530 535 608 609"],
  [10, -1, "540 735 900 902 904"],
  [12, 1, "618 619 626"],
  [13, -1, "845 849 948 951 1031"],
  [14, 1, "655 659 1101"],
  [16, -1, "500 550 557 603 608 618 625 635 637 650 703 726 728 735 745 755 822 825 830 910 927 958 1000 1012 1019 1039 1111 1121 1135"],
  [16, 1, "450 508 540 604 612 618 631 635 725 727 733 805 820 836 905 916 925 938 1005 1007 1009 1010 1059 1109 1125 1128 1130 1133 1141"],
  [19, -1, "820 830 832 833 900 945 1020"],
  [19, 1, "800 850 1034 1036 1048 1112"],
  [27, -1, "430 505 506 510 515 521 529 543 545 550 616 618 631 654 710 714 732 758 817 828 836 840 858 921 945 950 1001 1011 1021 1039 1058 1100 1106 1155"],
  [27, 1, "437 505 508 515 521 536 543 556 600 637 647 704 718 741 811 826 843 907 910 923 938 1001 1035 1040 1052 1108 1110 1154"],
  [37, -1, "450 500 502 504 521 531 545 607 609 615 618 624 626 643 700 704 707 712 717 721 726 740 743 748 750 805 814 817 824 826 835 839 842 850 900 917 921 926 942 944 957 1001 1023 1036 1041 1045 1100 1103 1106 1125 1130 1133 1145"],
  [37, 1, "450 459 500 511 530 549 551 554 558 600 602 620 626 629 637 643 646 649 653 702 710 718 721 729 731 744 758 803 813 815 820 824 832 840 842 849 903 920 925 930 950 952 1035 1039 1043 1050 1054 1057 1112 1130 1146 1150 1153"],
];

const minutes = (t: number) => Math.floor(t / 100) * 60 + (t % 100);
const yOf = (t: number) => 169 + (minutes(t) - 240) * 1.8;
const xOf = (i: number) => STATIONS[i][2];
const mm = (t: number) => String(t % 100).padStart(2, "0");

/* stretch of track that a train number needs to be written along it */
function neededLength(name: string) {
  if (name.length <= 4) return 45;
  if (name.length === 5) return 51;
  if (name.startsWith("Lr")) return 60;
  if (name.length === 6) return 58;
  if (/^(Lz|Dt|Lg)/.test(name)) return 63;
  if (name.length === 7) return 68;
  if (name.length === 10) return 84;
  return 72;
}

type Stop = { i: number; arr: number; dep: number };

const parseStops = (path: string): Stop[] =>
  path.split(" ").map((part) => {
    const [i, times] = part.split(":");
    const [arr, dep] = times.split("-");
    return { i: Number(i), arr: Number(arr), dep: Number(dep ?? arr) };
  });

function Minute({ i, t, side }: { i: number; t: number; side: number }) {
  return (
    <text x={xOf(i) + side * 10} y={yOf(t) + 1} textAnchor="middle">
      {mm(t)}
    </text>
  );
}

function Train({ kind, name, path }: { kind: Kind; name: string; path: string }) {
  const stops = parseStops(path);
  const east = stops[1].i > stops[0].i;
  const points = stops
    .flatMap((s) => [`${xOf(s.i)},${yOf(s.arr)}`, `${xOf(s.i)},${yOf(s.dep)}`])
    .join(" ");
  return (
    <g>
      <polyline points={points} fill="none" stroke={COLORS[kind]} strokeWidth={4} />
      {stops.map((s, k) => {
        const fromHub = east && k === 0 && s.i === 0;
        return (
          <g key={k}>
            <Minute i={s.i} t={s.arr} side={east && !fromHub ? 1 : -1} />
            {s.dep !== s.arr && <Minute i={s.i} t={s.dep} side={east ? -1 : 1} />}
          </g>
        );
      })}
      {name !== "" &&
        stops.slice(1).map((s, k) => {
          const p = stops[k];
          const down = s.i > p.i;
          const [x1, y1, x2, y2] = down
            ? [xOf(p.i), yOf(p.dep), xOf(s.i), yOf(s.arr)]
            : [xOf(s.i), yOf(s.arr), xOf(p.i), yOf(p.dep)];
          if (Math.abs(s.i - p.i) > 1 || x2 - x1 < neededLength(name)) return null;
          const cx = (x1 + x2) / 2 + 3;
          const cy = (y1 + y2) / 2 + (down ? -10 : 10);
          const angle = (Math.atan2(y2 - y1, x2 - x1) * 180) / Math.PI;
          return (
            <text key={k} x={cx} y={cy + 4} textAnchor="middle" transform={`rotate(${angle} ${cx} ${cy})`}>
              {name}
            </text>
          );
        })}
    </g>
  );
}

function Chart() {
  const hours = [4, 5, 6, 7, 8, 9, 10, 11, 12];
  return (
    <svg viewBox="4 120 2022 1013" className="block h-auto w-full" role="img" aria-label="Bildfahrplan Hagen - Kassel">
      <g className="font-['Liberation_Sans'] text-[13px]" fill="#000">
        {STATIONS.map(([name, km, x, start], i) => (
          <g key={km}>
            <text x={start ?? x} y={i % 2 === 1 ? 139 : 154} textAnchor={start ? "start" : "middle"}>
              {name}
            </text>
            <text x={x} y={166} textAnchor="middle">
              {km}
            </text>
          </g>
        ))}
      </g>
      <g stroke="#808080" strokeWidth={2}>
        {hours.map((h) => (
          <line key={h} x1={55} x2={1989} y1={yOf(h * 100)} y2={yOf(h * 100)} />
        ))}
        {STATIONS.map(([, km, x]) => (
          <line key={km} x1={x} x2={x} y1={169} y2={1033} />
        ))}
      </g>
      <path d="M55.5 169V1033M1989.5 169V1033" stroke="#000" strokeWidth={1} />
      <g className="font-['Open_Sans'] text-[12px]" fill="#000">
        {hours.map((h) => (
          <text key={h} x={46} y={yOf(h * 100) + 5} textAnchor="end">
            {h}:00
          </text>
        ))}
      </g>
      <g className="font-['Open_Sans'] text-[12px]" fill="#000">
        {NOTES.map(([i, side, times]) =>
          times.split(" ").map((t, k) => <Minute key={`${i}${side}${k}`} i={i} t={Number(t)} side={side} />)
        )}
        {TRAINS.map(([kind, name, path], k) => (
          <Train key={k} kind={kind} name={name} path={path} />
        ))}
        {STAYS.map(([kind, i, from, to], k) => (
          <line key={k} x1={xOf(i)} x2={xOf(i)} y1={yOf(from)} y2={yOf(to) + 1} stroke={COLORS[kind]} strokeWidth={4} />
        ))}
      </g>
    </svg>
  );
}

function Chevron({ d }: { d: string }) {
  return (
    <svg width="10" height="10" viewBox="0 0 10 10" fill="none" stroke="#a8a8a8" strokeWidth="1.4">
      <path d={d} />
    </svg>
  );
}

const TABS = ["Start", "Bildfahrplan", "Fahrplan und Strecke", "Ansicht-Einstellungen"];

export default function App() {
  return (
    <div className="flex min-h-screen flex-col border-l border-[#808080] bg-[#f0f0f0] font-['Open_Sans',sans-serif] text-black">
      <header className="relative flex h-[23px] items-start bg-white">
        <svg className="ml-[10px] h-[15px] w-[10px]" viewBox="0 0 10 15" fill="none">
          <path d="M8.500 0C5 .5 2 4 1.800 9.500L3.500 11C7 9 9.500 4 8.500 0Z" fill="#3c6a9c" stroke="#14263c" strokeWidth=".8" />
          <path d="M8 1C5.500 4 3 9 1.500 14" stroke="#14263c" strokeWidth="1" />
        </svg>
        <h1 className="ml-[9px] text-[11px] leading-[16px]">TimetableGraph V00.10 24.01.2021</h1>
        <div className="absolute left-[1160px] top-0 flex h-px w-[239px] justify-center bg-[#c8c8c8]">
          <div className="h-px w-[48px] bg-[#2a7ad0]" />
        </div>
        <div className="ml-auto flex h-[16px] items-center">
          <button type="button" aria-label="Minimieren" className="flex w-[45px] justify-center">
            <svg width="11" height="11" stroke="#000"><path d="M0 5.500H11" /></svg>
          </button>
          <button type="button" aria-label="Maximieren" className="flex w-[45px] justify-center">
            <svg width="11" height="11" stroke="#000" fill="none"><rect x=".5" y=".5" width="10" height="10" /></svg>
          </button>
          <button type="button" aria-label="Schließen" className="flex w-[47px] justify-center">
            <svg width="11" height="11" stroke="#000"><path d="M.5.5L10.500 10.500M10.500.5L.5 10.500" /></svg>
          </button>
        </div>
      </header>

      <nav className="flex h-[23px] items-end border-b border-[#d9d9d9] pl-[2px]">
        {TABS.map((tab, k) =>
          k === 1 ? (
            <button key={tab} type="button" className="h-[22px] border border-b-0 border-[#d9d9d9] bg-white px-px pb-[3px] text-[11px] leading-[15px]">
              <span className="block border border-dotted border-black px-px">{tab}</span>
            </button>
          ) : (
            <button key={tab} type="button" className="h-[20px] border border-b-0 border-[#d9d9d9] px-[3px] text-[11px] leading-[19px]">
              {tab}
            </button>
          )
        )}
      </nav>

      <main className="mt-[3px] flex">
        <section className="ml-[3px] min-w-0 flex-1 bg-white font-['Liberation_Sans',sans-serif]">
          <div className="pl-[10px] pt-[11px]">
            <h2 className="text-[27px] leading-[30px]">ZUSI Bildfahrplan</h2>
            <p className="text-[13px] leading-[15px]">
              Fahrplan:Timetables\Deutschland\Ruhrtalbahn\Hagen-Kassel_Fahrplan1981_04Uhr-12Uhr.fpn
            </p>
            <p className="text-[13px] leading-[15px]">
              Buchfahrplanstrecke:D:/Zusi3/_ZusiData/Timetables/Deutschland/Ruhrtalbahn\Hagen-Kassel_Fahrplan1981_04Uhr-12Uhr\D17441.timetable.xml
            </p>
          </div>
          <Chart />
        </section>
        <div className="flex w-[24px] flex-col items-center justify-between border-r-2 border-[#707070] py-[4px]">
          <button type="button" aria-label="Nach oben"><Chevron d="M1 7L5 3L9 7" /></button>
          <button type="button" aria-label="Nach unten"><Chevron d="M1 3L5 7L9 3" /></button>
        </div>
      </main>

      <div className="mt-[2px] flex h-[18px] items-center justify-between border-b border-t border-b-[#606060] border-t-white px-[4px]">
        <button type="button" aria-label="Nach links"><Chevron d="M7 1L3 5L7 9" /></button>
        <button type="button" aria-label="Nach rechts"><Chevron d="M3 1L7 5L3 9" /></button>
      </div>
      <footer className="mt-[3px] flex flex-1 flex-col justify-end border-t border-[#a0a0a0]">
        <div className="h-px bg-white" />
        <div className="h-px bg-[#707070]">
          <div className="ml-[37%] w-[28%] border-t border-dashed border-black" />
        </div>
      </footer>
    </div>
  );
}
